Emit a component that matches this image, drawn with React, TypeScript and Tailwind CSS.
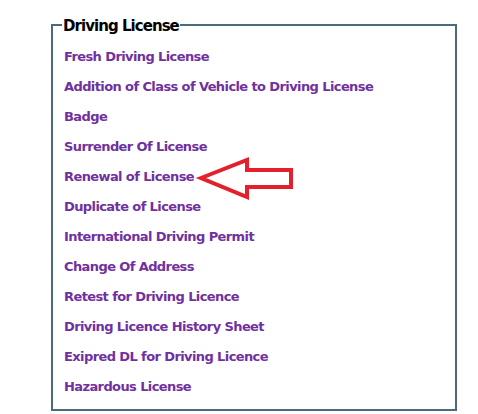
const links = [
  'Fresh Driving License',
  'Addition of Class of Vehicle to Driving License',
  'Badge',
  'Surrender Of License',
  'Renewal of License',
  'Duplicate of License',
  'International Driving Permit',
  'Change Of Address',
  'Retest for Driving Licence',
  'Driving Licence History Sheet',
  'Exipred DL for Driving Licence',
  'Hazardous License',
];

function Arrow() {
  return (
    <svg
      className="absolute left-[190px] top-[150px]"
      width="106"
      height="56"
      viewBox="0 0 106 56"
    >
      <path
        d="M11 28 L57 10 L57 20 L101 20 L101 37 L57 37 L57 47 Z"
        fill="none"
        stroke="#e3202b"
        strokeWidth="4"
        strokeLinejoin="miter"
      />
    </svg>
  );
}

export default function App() {
  return (
    <div className="relative w-[478px] h-[414px] bg-white pt-[16px] pl-[51px] font-['DejaVu_Sans',sans-serif]">
      <fieldset className="w-[406px] h-[395px] border-2 border-[#4b6b7d] m-0 pl-[11px] pr-2 pt-0 pb-0">
        <legend className="relative top-[1px] -ml-[2px] px-[1px] text-[15px] font-bold text-black leading-[18px] tracking-[-0.95px]">
          Driving License
        </legend>
        <ul className="flex flex-col mt-[14px]">
          {links.map((l) => (
            <li key={l} className="h-[30px] leading-[16px]">
              <a href="#" className="text-[13px] font-bold text-[#7030a0] tracking-[-0.6px]">
                {l}
              </a>
            </li>
          ))}
        </ul>
      </fieldset>
      <Arrow />
    </div>
  );
}
